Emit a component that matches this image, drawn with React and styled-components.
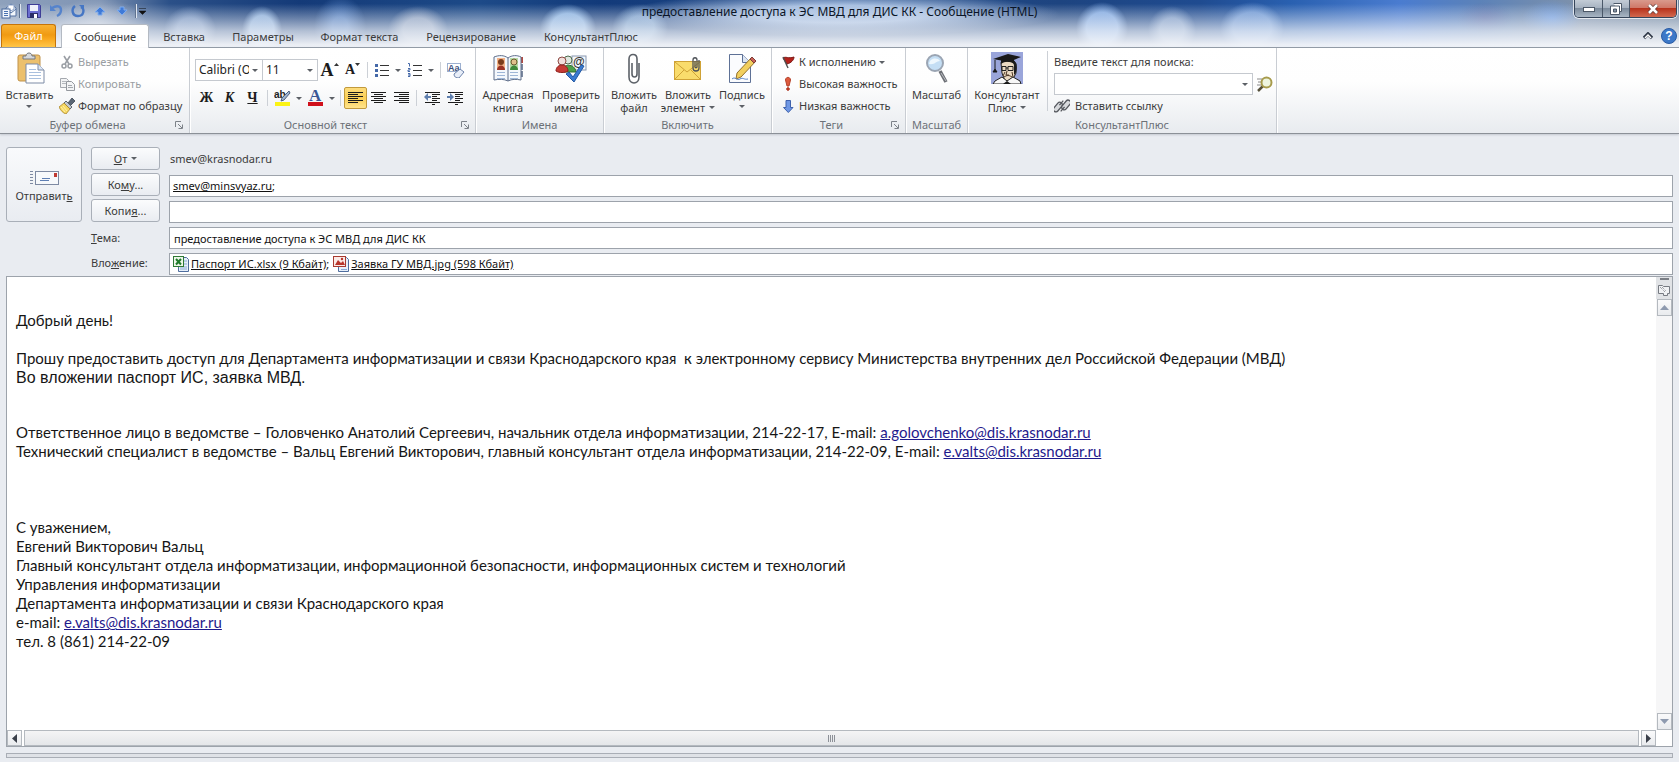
import React, { useState } from "react";
import styled, { createGlobalStyle, css } from "styled-components";

const GlobalStyle = createGlobalStyle`
  * { box-sizing: border-box; }
  body {
    margin: 0;
    background: #e9ecf1;
    color: #3b3b3b;
    font: 11px/16px "Noto Sans", "Open Sans", sans-serif;
  }
  button, input, select { font: inherit; color: inherit; }
  svg { display: block; flex: none; }
`

const Window = styled.div`
  min-height: 100vh;
  display: flex;
  flex-direction: column;
`

/* glass frame: title bar and tab strip share one backdrop */
const Glass = styled.header`
  border-bottom: 1px solid #8f98a3;
  background:
    linear-gradient(to bottom, transparent 0, transparent 8%, rgba(238, 241, 247, 0.4) 40%, rgba(240, 243, 248, 0.72) 66%, rgba(243, 245, 249, 0.96) 95%),
    radial-gradient(ellipse 220px 22px at 50% 14px, rgba(200, 220, 247, 0.8) 40%, transparent),
    radial-gradient(ellipse 50px 30px at 98px 28px, rgba(255, 255, 255, 0.5), transparent),
    radial-gradient(ellipse 26px 24px at 190px 30px, rgba(165, 190, 228, 0.6) 50%, transparent),
    radial-gradient(ellipse 20px 24px at 262px 30px, rgba(165, 200, 240, 0.8) 60%, transparent),
    radial-gradient(ellipse 26px 30px at 340px 26px, rgba(110, 155, 220, 0.7) 30%, transparent),
    radial-gradient(ellipse 30px 24px at 418px 30px, rgba(184, 195, 215, 0.7) 50%, transparent),
    radial-gradient(ellipse 28px 24px at 568px 28px, rgba(150, 190, 235, 0.9) 60%, transparent),
    radial-gradient(ellipse 28px 24px at 640px 28px, rgba(150, 190, 230, 0.7) 50%, transparent),
    radial-gradient(ellipse 26px 26px at 1102px 28px, rgba(140, 180, 235, 0.9) 60%, transparent),
    radial-gradient(ellipse 24px 24px at 1172px 30px, rgba(160, 185, 220, 0.7) 50%, transparent),
    radial-gradient(ellipse 32px 26px at 1252px 28px, rgba(140, 178, 232, 0.7) 60%, transparent),
    radial-gradient(ellipse 28px 16px at 1485px 18px, rgba(95, 105, 165, 0.6), transparent),
    radial-gradient(ellipse 30px 18px at 1552px 18px, rgba(110, 160, 235, 0.8), transparent),
    linear-gradient(to right, #8ea1bc 0, #7f94b4 100px, #2b5088 170px, #143a78 300px, #1d4a88 480px, #123a7a 600px, #234b88 840px, #1d4480 1060px, #1f4b90 1200px, #2960b0 1290px, #4a7cd0 1400px, #5c82b8 1480px, #7f92ab 1580px, #6f859f 100%);
`

const TitleBar = styled.div`
  height: 24px;
  display: grid;
  grid-template-columns: 1fr auto 1fr;
  align-items: start;
`
const QuickAccess = styled.div`
  display: flex;
  align-items: center;
  height: 22px;
  padding-left: 1px;
`
const QuickButton = styled.button`
  width: 22px;
  height: 22px;
  padding: 0;
  border: 0;
  background: none;
  display: grid;
  place-items: center;
`
const QuickDivider = styled.span`
  width: 2px;
  height: 14px;
  margin: 0 2px;
  background: #5f728f;
  border-right: 1px solid #dfe6f0;
`
const Title = styled.h1`
  margin: 0;
  font-size: 12px;
  line-height: 24px;
  font-weight: normal;
  color: #0b1526;
  white-space: pre;
`
const WindowButtons = styled.div`
  justify-self: end;
  display: flex;
  height: 18px;
  margin-right: 2px;
  border: 1px solid #36455a;
  border-top: 0;
  border-radius: 0 0 5px 5px;
  box-shadow: 0 0 0 1px rgba(255, 255, 255, 0.7);
  overflow: hidden;
`
const WindowButton = styled.button`
  width: ${props => (props.$close ? 47 : 27)}px;
  padding: 0;
  border: 0;
  border-left: ${props => (props.$first ? "0" : "1px solid #4a5869")};
  display: grid;
  place-items: center;
  background: ${props => props.$close
    ? "linear-gradient(#d99a8c 0, #cf7868 45%, #b8331c 50%, #d2694f 100%)"
    : "linear-gradient(#c3ccd6 0, #a7b3c1 45%, #7c8b9c 50%, #a9b6c4 100%)"};
`

const TabStrip = styled.nav`
  display: flex;
  align-items: stretch;
  height: 23px;
  padding: 0 2px 0 1px;
`
const FileTab = styled.button`
  width: 55px;
  margin-right: 5px;
  padding: 0;
  border: 1px solid #c5740a;
  border-bottom: 0;
  border-radius: 3px 3px 0 0;
  color: #fff;
  background: linear-gradient(#f9b233 0, #f09a12 45%, #f8a51b 60%, #ffc648 100%);
`
const Tab = styled.button`
  width: ${props => props.$width}px;
  padding: 2px 0 0;
  border: 0;
  white-space: nowrap;
  background: none;
  ${props => props.$active && css`
    border: 1px solid #b4bac3;
    border-bottom: 0;
    border-radius: 3px 3px 0 0;
    margin-bottom: -1px;
    padding: 0;
    background: #fff;
  `}
`
const StripEnd = styled.div`
  margin-left: auto;
  display: flex;
  align-items: center;
  gap: 8px;
`
const PlainButton = styled.button`
  padding: 0;
  border: 0;
  background: none;
  display: flex;
`

const Ribbon = styled.section`
  display: flex;
  height: 86px;
  background: linear-gradient(#fff 0, #fefefe 40%, #e8ebef 100%);
  border-bottom: 1px solid #8b9097;
  box-shadow: 0 1px 2px #c3c8cf;
`
const Group = styled.div`
  width: ${props => props.$width}px;
  flex: none;
  display: flex;
  flex-direction: column;
  padding-top: 3px;
  border-right: 1px solid #c9cdd3;
  box-shadow: 1px 0 0 #fff;
`
const GroupBody = styled.div`
  display: flex;
  height: 66px;
  padding: 0 ${props => props.$pad || 0}px;
`
const GroupFooter = styled.div`
  display: flex;
  align-items: center;
  height: 16px;
  color: #6c7178;
`
const GroupName = styled.span`
  flex: 1;
  text-align: center;
`
const Launcher = styled(PlainButton)`
  width: 14px;
`
const BigButton = styled.button`
  width: ${props => props.$width}px;
  flex: none;
  padding: 1px 0 0;
  border: 0;
  background: none;
  display: flex;
  flex-direction: column;
  align-items: center;
  line-height: 13px;
  white-space: nowrap;
`
const BigLabel = styled.span`
  margin-top: 4px;
  display: flex;
  flex-direction: column;
  align-items: center;
`
const WithArrow = styled.span`
  display: flex;
  align-items: center;
  gap: 4px;
  min-height: 11px;
`
const Rows = styled.div`
  flex: 1;
  min-width: 0;
  display: flex;
  flex-direction: column;
`
const SmallButton = styled.button`
  height: 22px;
  padding: 0;
  border: 0;
  background: none;
  display: flex;
  align-items: center;
  gap: ${props => props.$gap || 3}px;
  white-space: nowrap;
  &:disabled { color: #9a9ea3; }
`
const FontRows = styled.div`
  display: flex;
  flex-direction: column;
  gap: 6px;
  padding: 8px 0 0 5px;
`
const ToolRow = styled.div`
  display: flex;
  align-items: center;
  height: 22px;
`
const Tool = styled.button`
  width: ${props => (props.$menu ? 33 : 23)}px;
  height: 22px;
  padding: 0;
  border: 1px solid ${props => (props.$active ? "#c29a3c" : "transparent")};
  border-radius: 2px;
  background: ${props => (props.$active ? "linear-gradient(#fddc7c, #fbcf55 50%, #ffe48c)" : "none")};
  display: flex;
  align-items: center;
  justify-content: center;
  gap: ${props => (props.$menu ? 5 : 0)}px;
  color: #1c1c1c;
`
const Letter = styled.span`
  font: bold ${props => props.$size || 14}px/18px "Liberation Serif", serif;
  font-style: ${props => (props.$italic ? "italic" : "normal")};
  text-decoration: ${props => (props.$underline ? "underline" : "none")};
`
const Divider = styled.span`
  width: 1px;
  height: ${props => props.$height || 16}px;
  margin: 0 3px;
  background: #ccd0d6;
`
const Combo = styled.div`
  display: flex;
  align-items: center;
  width: ${props => props.$width}px;
  height: 22px;
  padding-right: 4px;
  background: #fff;
  border: 1px solid #c5c9cf;
  & + & { border-left: 0; }
`
const Select = styled.select`
  appearance: none;
  flex: 1;
  min-width: 0;
  height: 20px;
  padding: 0 3px;
  border: 0;
  background: none;
  color: #1e1e1e;
  font-size: 12px;
  text-overflow: clip;
`
const SearchArea = styled.div`
  flex: 1;
  display: flex;
  flex-direction: column;
  padding-left: 3px;
`
const SearchLabel = styled.label`
  line-height: 22px;
`
const SearchRow = styled.div`
  display: flex;
  align-items: center;
  gap: 3px;
  height: 22px;
`
const SearchInput = styled.input`
  flex: 1;
  min-width: 0;
  height: 20px;
  padding: 0 3px;
  border: 0;
  background: none;
`

const Envelope = styled.section`
  display: grid;
  grid-template-columns: 76px 69px 1fr;
  column-gap: 9px;
  padding: 13px 6px 1px;
`
const SendButton = styled.button`
  height: 75px;
  padding: 4px 0 0;
  border: 1px solid #a9afb8;
  border-radius: 3px;
  background: linear-gradient(#f9fafc, #e9ecf1);
  display: flex;
  flex-direction: column;
  align-items: center;
  justify-content: center;
  gap: 2px;
`
const Column = styled.div`
  display: flex;
  flex-direction: column;
  gap: 3px;
`
const AddressButton = styled.button`
  height: 23px;
  padding: 0;
  border: 1px solid #a9afb8;
  border-radius: 3px;
  background: linear-gradient(#fbfcfd, #e9ecf1);
  display: flex;
  align-items: center;
  justify-content: center;
`
const FieldLabel = styled.label`
  height: 22px;
  line-height: 26px;
`
const Fields = styled.div`
  min-width: 0;
  display: flex;
  flex-direction: column;
  gap: 4px;
`
const Sender = styled.output`
  height: 24px;
  padding-left: 1px;
  line-height: 23px;
`
const Field = styled.div`
  display: flex;
  align-items: center;
  height: 22px;
  padding: 0 3px;
  border: 1px solid #9da3ab;
  background: #fff;
  color: #111;
`
const FieldInput = styled.input`
  flex: 1;
  min-width: 0;
  height: 20px;
  padding: 0 1px;
  border: 0;
  outline: 0;
  background: none;
`
const FieldLink = styled.a`
  color: #111;
  text-decoration: underline;
  white-space: nowrap;
`
const Attachment = styled.span`
  display: flex;
  align-items: center;
  gap: 2px;
  margin-right: 4px;
`

const Editor = styled.main`
  flex: 1;
  display: grid;
  grid-template: 1fr 16px / 1fr 16px;
  margin: 0 6px;
  border: 1px solid #9da3ab;
  background: #fff;
`
const LetterBody = styled.article`
  padding: 34px 9px 40px;
  font: 15px/19px Lato, "Noto Sans", sans-serif;
  color: #161616;
`
const Line = styled.p`
  margin: 0;
  min-height: ${props => (props.$short ? 18 : 19)}px;
  white-space: pre-wrap;
  ${props => props.$arial && css`
    font: 16px/19px "Liberation Sans", sans-serif;
  `}
`
const MailLink = styled.a`
  color: #1f1a8c;
`
const VerticalBar = styled.div`
  display: flex;
  flex-direction: column;
  align-items: center;
  background: #f6f6f7;
`
const SplitBox = styled.div`
  width: 16px;
  height: 22px;
  display: flex;
  flex-direction: column;
  align-items: center;
  gap: 4px;
  padding-top: 1px;
  background: #e1e3e6;
`
const SplitHandle = styled.span`
  width: 9px;
  height: 2px;
  background: #7b7f86;
`
const ScrollButton = styled.button`
  width: 15px;
  height: ${props => (props.$side ? 16 : 17)}px;
  padding: 0;
  border: 1px solid #b4b9bf;
  background: linear-gradient(#fafafb, #e9ebee);
  display: grid;
  place-items: center;
`
const Track = styled.div`
  flex: 1;
`
const HorizontalBar = styled.div`
  display: flex;
  gap: 2px;
`
const Thumb = styled.div`
  flex: 1;
  display: grid;
  place-items: center;
  border: 1px solid #b4b9bf;
  background: linear-gradient(#f4f4f5, #e4e6e9);
`
const StatusStrip = styled.footer`
  height: 5px;
  margin: 6px 6px 4px;
  border: 1px solid #a9aeb6;
  background: #dfe2e7;
`

function Arrow({ color = "#5c6066", size = 6 }) {
  return (
    <svg width={size} height="3" viewBox="0 0 6 3" aria-hidden="true">
      <path d="M0 0h6L3 3z" fill={color} />
    </svg>
  )
}

function Icon({ w = 16, h = 16, box, children }) {
  return (
    <svg width={w} height={h} viewBox={box || `0 0 ${w} ${h}`} fill="none" aria-hidden="true">
      {children}
    </svg>
  )
}

const AppIcon = () => (
  <Icon>
    <path d="M5 5l5-4 5 4v8H5z" fill="#f4f8fd" stroke="#5471a0" />
    <path d="M5 6l5 4 5-4" stroke="#5471a0" />
    <path d="M7 2h6v4l-3 2-3-2z" fill="#fff" stroke="#8ba2c8" />
    <rect x="1" y="6" width="8" height="9" fill="#f3f7fc" stroke="#48699c" />
    <path d="M3 8.500h4M3 10.500h4M3 12.500h4" stroke="#4a73b0" />
  </Icon>
)
const SaveIcon = () => (
  <Icon>
    <path d="M1.500 1.500h12l1 1v12h-13z" fill="#6a6dcf" stroke="#3d3d96" />
    <rect x="4" y="2" width="8" height="6" fill="#eef2fb" />
    <rect x="4" y="10" width="8" height="5" fill="#2b2e68" />
    <rect x="8" y="11" width="3" height="4" fill="#fff" />
  </Icon>
)
const UndoIcon = () => (
  <Icon>
    <path d="M4 5c5-3 9-2 9 2 0 3-2 5-4 6" stroke="#5583cc" strokeWidth="2.400" />
    <path d="M2 2v6h6z" fill="#5583cc" />
  </Icon>
)
const RedoIcon = () => (
  <Icon>
    <path d="M5 3C1 6 2 13 8 13s7-7 3-9" stroke="#4576c4" strokeWidth="2.400" />
    <path d="M9 2h5v5z" fill="#4576c4" />
  </Icon>
)
const QuickArrow = ({ down }) => (
  <Icon>
    <g transform={down ? "rotate(180 8 8)" : undefined}>
      <path d="M8 4l5 5h-3v3H6V9H3z" fill="#3f7ad8" stroke="#7fabec" />
    </g>
  </Icon>
)
const PasteIcon = () => (
  <Icon w={32} h={32}>
    <rect x="4" y="3" width="22" height="26" rx="2" fill="#ecc06c" stroke="#c0924a" />
    <path d="M9 7V4h3c0-4 6-4 6 0h3v3z" fill="#d5d8dc" stroke="#74787e" />
    <path d="M12 12h12l6 6v13H12z" fill="#fff" stroke="#7d8ba5" />
    <path d="M24 12v6h6" fill="#dbe6f5" stroke="#7d8ba5" />
    <path d="M15 17.500h7M15 20.500h12M15 23.500h12M15 26.500h12" stroke="#a9c0de" />
  </Icon>
)
const CutIcon = () => (
  <Icon>
    <path d="M5 2l5 8M11 2L6 10" stroke="#9a9ea4" strokeWidth="1.600" />
    <circle cx="5" cy="12" r="2" stroke="#9a9ea4" strokeWidth="1.500" />
    <circle cx="11" cy="12" r="2" stroke="#9a9ea4" strokeWidth="1.500" />
  </Icon>
)
const CopyIcon = () => (
  <Icon>
    <path d="M1.500 2.500h6l2 2v7h-8z" fill="#f3f4f5" stroke="#a4a8ae" />
    <path d="M3 5.500h4M3 7.500h4" stroke="#b4b8bd" />
    <path d="M7.500 5.500h5l3 3v6h-8z" fill="#f3f4f5" stroke="#94989e" />
    <path d="M9 9.500h4M9 11.500h5" stroke="#a4a8ae" />
  </Icon>
)
const BrushIcon = () => (
  <Icon>
    <path d="M13 0l3 3-5 5-2-3z" fill="#5a6675" stroke="#3b4552" strokeWidth=".8" />
    <path d="M7 3l6 6-2 2-6-6z" fill="#c2c9d1" stroke="#5d6670" />
    <path d="M5 5l6 6-4 5c-3-1-5-3-7-7z" fill="#f6d862" stroke="#a9852a" strokeWidth=".8" />
    <path d="M4 8l4 5M2 9l4 5" stroke="#fff1a8" />
  </Icon>
)
const BulletsIcon = ({ numbered }) => (
  <Icon>
    {numbered
      ? <path d="M1 1.500h1.500v3M1 6.500h2v1.500H1V9.500h2M1 11.500h2v3H1M1 13h2" stroke="#4468a8" />
      : <path d="M1 2h3v3H1zM1 7h3v3H1zM1 12h3v3H1z" fill="#4468a8" />}
    <path d="M6 3.500h9M6 8.500h9M6 13.500h9" stroke="#333" strokeWidth="1" />
  </Icon>
)
const ClearIcon = () => (
  <Icon w={18}>
    <rect x=".5" y="1.500" width="13" height="8" fill="#fff" stroke="#9db0d0" />
    <text x="1" y="9" fontSize="9" fontWeight="bold" fontFamily="Liberation Sans" fill="#3b4f7c">Aa</text>
    <path d="M7 12l6-5 4 3-5 6c-3 0-5-1-5-4z" fill="#e8eef8" stroke="#6c82aa" />
  </Icon>
)
const HighlightIcon = () => (
  <Icon w={17} h={18}>
    <text x="0" y="9" fontSize="10" fontWeight="bold" fontFamily="Liberation Sans" fill="#222">ab</text>
    <path d="M15 2L8 9l-1 3 3-1 6-7z" fill="#9fb5d2" stroke="#4c607e" />
    <rect x="1" y="13" width="15" height="4" fill="#fbf315" />
  </Icon>
)
const FontColorIcon = () => (
  <Icon w={17} h={18}>
    <text x="2" y="12" fontSize="17" fontWeight="bold" fontFamily="Liberation Serif" fill="#3a5795">A</text>
    <rect x="1" y="13" width="15" height="4" fill="#d0101b" />
  </Icon>
)
const AlignIcon = ({ from, to }) => (
  <Icon w={15} h={12}>
    <path d={`M0 .5h15M${from} 2.500H${to}M0 4.500h15M${from} 6.500H${to}M0 8.500h15M${from} 10.500H${to}`} stroke="#1c1c1c" />
  </Icon>
)
const IndentIcon = ({ more }) => (
  <Icon>
    <path d="M1 2.500h15M8 4.500h8M8 6.500h5M8 8.500h8M8 10.500h5M1 12.500h15M8 14.500h3" stroke="#1c1c1c" />
    <path d={more ? "M0 6h3V3l4 4-4 4V8H0z" : "M7 6H4V3L0 7l4 4V8h3z"} fill="#5f7fae" />
  </Icon>
)
const BookIcon = () => (
  <Icon w={32} h={32}>
    <path d="M29 5h2v6h-2z" fill="#b34a40" />
    <path d="M29 12h2v6h-2zM29 19h2v6h-2z" fill="#7d8aa0" />
    <path d="M2 5c5-2 10-2 14 1 4-3 9-3 13-1v23c-5-1-9-1-13 1-4-2-9-2-14-1z" fill="#f5f8fc" stroke="#5f6f8b" />
    <path d="M16 6v23" stroke="#5f6f8b" />
    <rect x="5" y="6" width="8" height="12" fill="#f4b489" />
    <circle cx="9" cy="10" r="3" fill="#7a3c1c" />
    <path d="M5 18c0-6 8-6 8 0z" fill="#9c3426" />
    <rect x="18" y="6" width="8" height="12" fill="#b7dca6" />
    <circle cx="22" cy="10" r="3" fill="#e0c08c" stroke="#6c5a30" />
    <path d="M18 18c0-6 8-6 8 0z" fill="#3f8a3c" />
    <path d="M5 20.500h8M5 23.500h8M18 20.500h8M18 23.500h8M5 26.500h8M18 26.500h8" stroke="#9fb6d6" />
  </Icon>
)
const CheckNamesIcon = () => (
  <Icon w={32} h={32}>
    <rect x="17" y="4" width="14" height="14" fill="#f4f7fb" stroke="#8897b0" />
    <circle cx="13" cy="8" r="4" fill="#dfe7df" stroke="#4d6a4d" />
    <path d="M7 20c0-9 13-9 14 0z" fill="#4ca04a" stroke="#2f6f30" />
    <circle cx="7" cy="9" r="4" fill="#f0dedb" stroke="#8c4a44" />
    <path d="M1 19c0-8 12-8 12 0-3 2-9 2-12 0z" fill="#c63a34" stroke="#8e211d" />
    <text x="18" y="14" fontSize="12" fontWeight="bold" fontFamily="Liberation Sans" fill="#333">@</text>
    <path d="M11 22l3-2 4 5 8-12 3 1-10 16z" fill="#3a7bd0" stroke="#2358a3" />
  </Icon>
)
const ClipIcon = () => (
  <Icon w={32} h={32}>
    <path d="M21 11v14c0 8-10 8-10 0V7c0-6 8-6 8 0v15c0 4-5 4-5 0V11" stroke="#5c6168" strokeWidth="1.600" />
  </Icon>
)
const AttachItemIcon = () => (
  <Icon w={32} h={32}>
    <rect x="2.500" y="9.500" width="26" height="18" fill="#f9dc6c" stroke="#cfa236" />
    <path d="M3 10l12 10 13-10M3 27l9-9M28 27l-9-9" stroke="#cfa236" />
    <path d="M27 8v8c0 4-6 4-6 0V8c0-3 4-3 4 0v7c0 1-2 1-2 0V9" stroke="#4f5359" strokeWidth="1.300" />
  </Icon>
)
const SignatureIcon = () => (
  <Icon w={32} h={32}>
    <path d="M3.500 2.500h13l8 8v20h-21z" fill="#fbfcfe" stroke="#5e7196" />
    <path d="M16.500 2.500v8h8" fill="#dde6f3" stroke="#5e7196" />
    <path d="M26 5l4 4-15 16-5 2 1-6z" fill="#f2cf5e" stroke="#93702a" />
    <path d="M26 5l4 4-2 2-4-4z" fill="#c96258" stroke="#7e3d36" />
    <path d="M6 27c3-3 5 2 8 0s4 1 8 0" stroke="#5a83c4" />
  </Icon>
)
const FlagIcon = () => (
  <Icon>
    <path d="M3 4c3-2 5 1 11-1 0 3-3 6-7 7z" fill="#b5221c" stroke="#7d1814" />
    <path d="M3 3l5 11" stroke="#4f4f4f" strokeWidth="1.400" />
  </Icon>
)
const HighIcon = () => (
  <Icon>
    <path d="M5.500 4c0-3.500 5-3.500 5 0L9 10H7z" fill="#dd5a3d" stroke="#b5412a" />
    <circle cx="8" cy="13" r="1.300" fill="#dd4a2d" stroke="#a62c17" />
  </Icon>
)
const LowIcon = () => (
  <Icon>
    <path d="M6 2.500h4.500v7h2.500l-4.700 5L3.500 9.500H6z" fill="#6f97e4" stroke="#3f62ad" />
  </Icon>
)
const ZoomIcon = () => (
  <Icon w={32} h={32}>
    <path d="M19 19l6 11" stroke="#6d7076" strokeWidth="3.500" />
    <path d="M20 21l5 8" stroke="#b9bcc1" strokeWidth="1" />
    <circle cx="14" cy="11" r="8" fill="#c4def4" stroke="#9ba5b3" strokeWidth="2" />
    <path d="M8 12c1-6 8-7 11-3-4 0-5 4-11 3z" fill="#eef7fd" />
  </Icon>
)
const ProfessorIcon = () => (
  <Icon w={32} h={32}>
    <rect width="32" height="32" fill="#9aa5da" />
    <path d="M10 11c0-4 14-4 15 1l0 9-4 8h-7l-3-8z" fill="#ead9c2" stroke="#222" />
    <path d="M22 8c5 2 5 12 1 15l0-9z" fill="#1c1c1c" />
    <path d="M2 7l15-5 13 3-12 5z" fill="#181818" />
    <path d="M10 7v5c4-3 9-3 13 0V7z" fill="#181818" />
    <path d="M4 8v9l-2 3h4l-2-3" fill="#181818" stroke="#181818" />
    <path d="M11 14.500h4v4h-4zM17 14.500h5v4h-5zM15 16h2" stroke="#222" />
    <path d="M16 19l-1 4h3M13 25c3-2 5-2 8 0M14 20l-2 4M21 20l1 5" stroke="#4a3524" />
    <path d="M2 32l2-3 7-4 5 4 6-4 7 4 1 3z" fill="#f7f7f7" stroke="#222" />
    <path d="M12 32l4-3 4 3z" fill="#181818" />
  </Icon>
)
const SearchIcon = () => (
  <Icon w={18} h={18}>
    <path d="M1 4h5M2 7h3M1 10h4" stroke="#8a8a8a" />
    <path d="M7 11l-5 5" stroke="#55503a" strokeWidth="2.500" />
    <circle cx="10.500" cy="7.500" r="5" fill="#eef5df" stroke="#a79b4c" strokeWidth="2" />
  </Icon>
)
const LinkIcon = () => (
  <Icon>
    <g stroke="#55585e" strokeWidth="1.300" transform="rotate(-50 8 8)">
      <rect x="-1" y="3" width="11" height="5" rx="2.500" fill="#d7d9dc" />
      <rect x="6" y="8" width="11" height="5" rx="2.500" fill="#d7d9dc" />
      <path d="M3 10.500h6M7 5.500h6" />
    </g>
  </Icon>
)
const LauncherIcon = () => (
  <Icon w={8} h={8}>
    <path d="M.5 6V.5H6M3 3l4 4M7.500 3.500v4h-4" stroke="#7d8289" />
  </Icon>
)
const EnvelopeIcon = () => (
  <Icon w={29} h={16}>
    <path d="M0 1.500h3M0 4.500h3M0 7.500h3M0 10.500h3M0 13.500h3" stroke="#7e8aa3" />
    <rect x="5.500" y="1.500" width="23" height="13" fill="#f7f9fc" stroke="#7e8aa3" />
    <rect x="24" y="3" width="3" height="4" fill="#c03a34" />
    <path d="M12 8.500h8M10 10.500h9" stroke="#5f7fb4" />
  </Icon>
)
const ExcelIcon = () => (
  <Icon>
    <path d="M5.500 1.500h8l2 2v12h-10z" fill="#e6effa" stroke="#4e6d9e" />
    <path d="M10 5h4M10 8h4M7 11h7M7 13h7" stroke="#8aa9d4" />
    <rect x=".5" y=".5" width="10" height="10" fill="#eef7ea" stroke="#2f7a35" />
    <path d="M3 3l5 5.500M8 3L3 8.500" stroke="#1f7a2a" strokeWidth="2" />
  </Icon>
)
const ImageFileIcon = () => (
  <Icon>
    <path d="M5.500 1.500h8l2 2v12h-10z" fill="#e6effa" stroke="#4e6d9e" />
    <rect x=".5" y=".5" width="12" height="10" fill="#fbeae6" stroke="#a83a30" />
    <path d="M2 9l3-5 3 3 2-2 2 4z" fill="#b8352b" />
    <circle cx="9" cy="3" r="1.200" fill="#b8352b" />
    <path d="M8 13.500h6" stroke="#8aa9d4" />
  </Icon>
)
const BrowseIcon = () => (
  <Icon w={12} h={12}>
    <path d="M.5 1.500h4l1 1h6v7h-2v2h-4v-2h-5z" fill="#f1f2f4" stroke="#777b82" />
    <path d="M2 3l5 5M4 3l4 4" stroke="#777b82" strokeDasharray="1 1" />
  </Icon>
)

const tabs = [
  { name: "Сообщение", width: 88 },
  { name: "Вставка", width: 70 },
  { name: "Параметры", width: 88 },
  { name: "Формат текста", width: 105 },
  { name: "Рецензирование", width: 118 },
  { name: "КонсультантПлюс", width: 122 },
]

function RibbonGroup({ name, width, pad, launcher, children }) {
  return (
    <Group $width={width}>
      <GroupBody $pad={pad}>{children}</GroupBody>
      <GroupFooter>
        <GroupName>{name}</GroupName>
        {launcher && <Launcher aria-label={name}><LauncherIcon /></Launcher>}
      </GroupFooter>
    </Group>
  )
}

function Big({ icon, width, first, second, menu }) {
  return (
    <BigButton $width={width}>
      {icon}
      <BigLabel>
        <span>{first}</span>
        {(second || menu) && <WithArrow>{second}{menu && <Arrow />}</WithArrow>}
      </BigLabel>
    </BigButton>
  )
}

function MessageRibbon() {
  const [align, setAlign] = useState("left");
  const aligns = [
    ["left", 0, 10],
    ["center", 3, 12],
    ["right", 5, 15],
  ];

  return (
    <Ribbon>
      <RibbonGroup name="Буфер обмена" width={190} launcher>
        <Big icon={<PasteIcon />} width={59} first="Вставить" menu />
        <Rows>
          <SmallButton disabled><CutIcon />Вырезать</SmallButton>
          <SmallButton disabled><CopyIcon />Копировать</SmallButton>
          <SmallButton><BrushIcon />Формат по образцу</SmallButton>
        </Rows>
      </RibbonGroup>

      <RibbonGroup name="Основной текст" width={286} launcher>
        <FontRows>
          <ToolRow>
            <Combo $width={68}>
              <Select aria-label="Шрифт"><option>Calibri (Основной текст)</option></Select>
              <Arrow />
            </Combo>
            <Combo $width={55}>
              <Select aria-label="Размер шрифта"><option>11</option></Select>
              <Arrow />
            </Combo>
            <Tool aria-label="Увеличить размер"><Letter $size={18}>A</Letter><Icon w={5} h={14}><path d="M0 3l2.500-3L5 3z" fill="#333" /></Icon></Tool>
            <Tool aria-label="Уменьшить размер"><Letter $size={14}>A</Letter><Icon w={5} h={14}><path d="M0 0h5L2.500 3z" fill="#333" /></Icon></Tool>
            <Divider />
            <Tool $menu aria-label="Маркеры"><BulletsIcon /><Arrow /></Tool>
            <Tool $menu aria-label="Нумерация"><BulletsIcon numbered /><Arrow /></Tool>
            <Divider />
            <Tool aria-label="Очистить формат"><ClearIcon /></Tool>
          </ToolRow>
          <ToolRow>
            <Tool><Letter>Ж</Letter></Tool>
            <Tool><Letter $italic>К</Letter></Tool>
            <Tool><Letter $underline>Ч</Letter></Tool>
            <Divider />
            <Tool $menu aria-label="Цвет выделения"><HighlightIcon /><Arrow /></Tool>
            <Tool $menu aria-label="Цвет текста"><FontColorIcon /><Arrow /></Tool>
            <Divider />
            {aligns.map(([name, from, to]) => (
              <Tool key={name} $active={align === name} aria-label={name} onClick={() => setAlign(name)}>
                <AlignIcon from={from} to={to} />
              </Tool>
            ))}
            <Divider />
            <Tool aria-label="Уменьшить отступ"><IndentIcon /></Tool>
            <Tool aria-label="Увеличить отступ"><IndentIcon more /></Tool>
          </ToolRow>
        </FontRows>
      </RibbonGroup>

      <RibbonGroup name="Имена" width={128}>
        <Big icon={<BookIcon />} width={64} first="Адресная" second="книга" />
        <Big icon={<CheckNamesIcon />} width={62} first="Проверить" second="имена" />
      </RibbonGroup>

      <RibbonGroup name="Включить" width={168} pad={3}>
        <Big icon={<ClipIcon />} width={54} first="Вложить" second="файл" />
        <Big icon={<AttachItemIcon />} width={54} first="Вложить" second="элемент" menu />
        <Big icon={<SignatureIcon />} width={54} first="Подпись" menu />
      </RibbonGroup>

      <RibbonGroup name="Теги" width={134} pad={8} launcher>
        <Rows>
          <SmallButton><FlagIcon />К исполнению<Arrow /></SmallButton>
          <SmallButton><HighIcon />Высокая важность</SmallButton>
          <SmallButton><LowIcon />Низкая важность</SmallButton>
        </Rows>
      </RibbonGroup>

      <RibbonGroup name="Масштаб" width={62}>
        <Big icon={<ZoomIcon />} width={61} first="Масштаб" />
      </RibbonGroup>

      <RibbonGroup name="КонсультантПлюс" width={309} pad={2}>
        <Big icon={<ProfessorIcon />} width={74} first="Консультант" second="Плюс" menu />
        <Divider $height={60} />
        <SearchArea>
          <SearchLabel htmlFor="search">Введите текст для поиска:</SearchLabel>
          <SearchRow>
            <Combo $width={199}>
              <SearchInput id="search" type="text" />
              <Arrow />
            </Combo>
            <PlainButton aria-label="Найти"><SearchIcon /></PlainButton>
          </SearchRow>
          <SmallButton $gap={5}><LinkIcon />Вставить ссылку</SmallButton>
        </SearchArea>
      </RibbonGroup>
    </Ribbon>
  )
}

function MessageHeader() {
  const [subject, setSubject] = useState("предоставление доступа к ЭС МВД для ДИС КК");

  return (
    <Envelope>
      <SendButton>
        <EnvelopeIcon />
        <span>Отправит<u>ь</u></span>
      </SendButton>
      <Column>
        <AddressButton><WithArrow><span><u>О</u>т</span><Arrow /></WithArrow></AddressButton>
        <AddressButton><span>Ко<u>м</u>у...</span></AddressButton>
        <AddressButton><span>Копи<u>я</u>...</span></AddressButton>
        <FieldLabel htmlFor="subject"><u>Т</u>ема:</FieldLabel>
        <FieldLabel htmlFor="attachments">Вло<u>ж</u>ение:</FieldLabel>
      </Column>
      <Fields>
        <Sender>smev@krasnodar.ru</Sender>
        <Field>
          <FieldLink href="mailto:smev@minsvyaz.ru">smev@minsvyaz.ru</FieldLink>;
          <FieldInput aria-label="Кому" />
        </Field>
        <Field><FieldInput aria-label="Копия" /></Field>
        <Field>
          <FieldInput id="subject" value={subject} onChange={e => setSubject(e.target.value)} />
        </Field>
        <Field>
          <Attachment><ExcelIcon /><span><FieldLink href="#xlsx">Паспорт ИС.xlsx (9 Кбайт)</FieldLink>;</span></Attachment>
          <Attachment><ImageFileIcon /><FieldLink href="#jpg">Заявка ГУ МВД.jpg (598 Кбайт)</FieldLink></Attachment>
          <FieldInput id="attachments" />
        </Field>
      </Fields>
    </Envelope>
  )
}

function MessageBody() {
  return (
    <Editor>
      <LetterBody>
        <Line>Добрый день!</Line>
        <Line />
        <Line>Прошу предоставить доступ для Департамента информатизации и связи Краснодарского края  к электронному сервису Министерства внутренних дел Российской Федерации (МВД)</Line>
        <Line $arial>Во вложении паспорт ИС, заявка МВД.</Line>
        <Line $short />
        <Line $short />
        <Line>
          Ответственное лицо в ведомстве – Головченко Анатолий Сергеевич, начальник отдела информатизации, 214-22-17, E-mail: <MailLink href="mailto:a.golovchenko@dis.krasnodar.ru">a.golovchenko@dis.krasnodar.ru</MailLink>
        </Line>
        <Line>
          Технический специалист в ведомстве – Вальц Евгений Викторович, главный консультант отдела информатизации, 214-22-09, E-mail: <MailLink href="mailto:e.valts@dis.krasnodar.ru">e.valts@dis.krasnodar.ru</MailLink>
        </Line>
        <Line />
        <Line />
        <Line />
        <Line>С уважением,</Line>
        <Line>Евгений Викторович Вальц</Line>
        <Line>Главный консультант отдела информатизации, информационной безопасности, информационных систем и технологий</Line>
        <Line>Управления информатизации</Line>
        <Line>Департамента информатизации и связи Краснодарского края</Line>
        <Line>e-mail: <MailLink href="mailto:e.valts@dis.krasnodar.ru">e.valts@dis.krasnodar.ru</MailLink></Line>
        <Line>тел. 8 (861) 214-22-09</Line>
      </LetterBody>
      <VerticalBar>
        <SplitBox><SplitHandle /><BrowseIcon /></SplitBox>
        <ScrollButton aria-label="Вверх"><Icon w={9} h={5}><path d="M0 5l4.500-5L9 5z" fill="#8e9aaf" /></Icon></ScrollButton>
        <Track />
        <ScrollButton aria-label="Вниз"><Icon w={9} h={5}><path d="M0 0h9L4.500 5z" fill="#8e9aaf" /></Icon></ScrollButton>
      </VerticalBar>
      <HorizontalBar>
        <ScrollButton $side aria-label="Влево"><Icon w={5} h={9}><path d="M5 0v9L0 4.500z" fill="#3a3f4a" /></Icon></ScrollButton>
        <Thumb><Icon w={8} h={7}><path d="M.5 0v7M2.500 0v7M4.500 0v7M6.500 0v7" stroke="#8d9198" /></Icon></Thumb>
        <ScrollButton $side aria-label="Вправо"><Icon w={5} h={9}><path d="M0 0v9l5-4.500z" fill="#3a3f4a" /></Icon></ScrollButton>
      </HorizontalBar>
    </Editor>
  )
}

export default function App() {
  const [active, setActive] = useState("Сообщение");

  return (
    <Window>
      <GlobalStyle />
      <Glass>
        <TitleBar>
          <QuickAccess>
            <AppIcon />
            <QuickDivider />
            <QuickButton aria-label="Сохранить"><SaveIcon /></QuickButton>
            <QuickButton aria-label="Отменить"><UndoIcon /></QuickButton>
            <QuickButton aria-label="Повторить"><RedoIcon /></QuickButton>
            <QuickButton aria-label="Предыдущий"><QuickArrow /></QuickButton>
            <QuickButton aria-label="Следующий"><QuickArrow down /></QuickButton>
            <QuickDivider />
            <PlainButton aria-label="Настройка панели">
              <Icon w={7} h={7}><path d="M0 .5h7M0 3h7L3.500 6.500z" fill="#111" stroke="#111" strokeWidth=".5" /></Icon>
            </PlainButton>
          </QuickAccess>
          <Title>предоставление доступа к ЭС МВД для ДИС КК - Сообщение (HTML)</Title>
          <WindowButtons>
            <WindowButton $first aria-label="Свернуть">
              <Icon w={12} h={6}><rect x=".5" y="1.500" width="11" height="4" fill="#fff" stroke="#4c5867" /></Icon>
            </WindowButton>
            <WindowButton aria-label="Восстановить">
              <Icon w={12} h={12}>
                <path d="M3.500 .5h8v8h-2" fill="#fff" stroke="#4c5867" />
                <path d="M.5 3h9v8.500h-9zM3.500 6v3h3V6z" fillRule="evenodd" fill="#fff" stroke="#4c5867" />
              </Icon>
            </WindowButton>
            <WindowButton $close aria-label="Закрыть">
              <Icon w={12} h={10}><path d="M2 1l8 8M10 1L2 9" stroke="#5e3530" strokeWidth="4" /><path d="M2 1l8 8M10 1L2 9" stroke="#fff" strokeWidth="2.600" /></Icon>
            </WindowButton>
          </WindowButtons>
        </TitleBar>
        <TabStrip>
          <FileTab>Файл</FileTab>
          {tabs.map(tab => (
            <Tab key={tab.name} $width={tab.width} $active={active === tab.name} onClick={() => setActive(tab.name)}>
              {tab.name}
            </Tab>
          ))}
          <StripEnd>
            <PlainButton aria-label="Свернуть ленту">
              <Icon w={10} h={8}><path d="M1 6l4-4 4 4" stroke="#333c4a" strokeWidth="3.500" /><path d="M2 6l3-3 3 3" stroke="#fff" strokeWidth="1.500" /></Icon>
            </PlainButton>
            <PlainButton aria-label="Справка">
              <Icon>
                <circle cx="8" cy="8" r="7.500" fill="#3c78c8" stroke="#2a5ba3" />
                <text x="8" y="12" textAnchor="middle" fontSize="12" fontWeight="bold" fontFamily="Liberation Sans" fill="#fff">?</text>
              </Icon>
            </PlainButton>
          </StripEnd>
        </TabStrip>
      </Glass>
      <MessageRibbon />
      <MessageHeader />
      <MessageBody />
      <StatusStrip />
    </Window>
  )
}
